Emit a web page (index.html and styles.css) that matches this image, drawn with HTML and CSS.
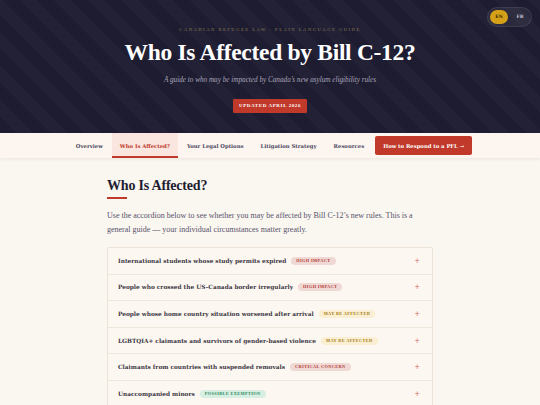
FILE: index.html
```html
<!DOCTYPE html>
<html lang="en">
<head>
<meta charset="utf-8">
<title>Who Is Affected by Bill C-12?</title>
<link rel="stylesheet" href="styles.css">
</head>
<body>
<header class="hero">
  <div class="lang">
    <span class="lang-opt active">EN</span>
    <span class="lang-opt">FR</span>
  </div>
  <p class="kicker">Canadian Refugee Law · Plain Language Guide</p>
  <h1 class="hero-title">Who Is Affected by Bill C-12?</h1>
  <p class="hero-sub">A guide to who may be impacted by Canada’s new asylum eligibility rules</p>
  <span class="updated">Updated April 2026</span>
</header>
<nav class="nav">
  <a class="tab">Overview</a>
  <a class="tab active">Who Is Affected?</a>
  <a class="tab">Your Legal Options</a>
  <a class="tab">Litigation Strategy</a>
  <a class="tab">Resources</a>
  <a class="cta">How to Respond to a PFL →</a>
</nav>
<main class="main">
  <section class="section">
    <h2 class="section-title">Who Is Affected?</h2>
    <div class="rule"></div>
    <p class="intro">Use the accordion below to see whether you may be affected by Bill C-12’s new rules. This is a general guide — your individual circumstances matter greatly.</p>
    <div class="accordion">
      <div class="row"><span class="label">International students whose study permits expired</span><span class="badge red">High impact</span><span class="plus">+</span></div>
      <div class="row"><span class="label">People who crossed the US–Canada border irregularly</span><span class="badge red">High impact</span><span class="plus">+</span></div>
      <div class="row"><span class="label">People whose home country situation worsened after arrival</span><span class="badge yellow">May be affected</span><span class="plus">+</span></div>
      <div class="row"><span class="label">LGBTQIA+ claimants and survivors of gender-based violence</span><span class="badge yellow">May be affected</span><span class="plus">+</span></div>
      <div class="row"><span class="label">Claimants from countries with suspended removals</span><span class="badge red">Critical concern</span><span class="plus">+</span></div>
      <div class="row"><span class="label">Unaccompanied minors</span><span class="badge green">Possible exemption</span><span class="plus">+</span></div>
    </div>
  </section>
</main>
</body>
</html>
```

FILE: styles.css
```css
* { box-sizing: border-box; }
html, body { margin: 0; padding: 0; }
body {
  background: #faf6f0;
  font-family: "DejaVu Serif", "Liberation Serif", serif;
  color: #2a2738;
  overflow: hidden;
}

.hero {
  position: relative;
  height: 133px;
  padding-top: 25px;
  text-align: center;
  background-color: #1e1c30;
  background-image: repeating-linear-gradient(45deg, rgba(255,255,255,0) 0, rgba(255,255,255,0) 12px, rgba(255,255,255,0.022) 12px, rgba(255,255,255,0.022) 24px);
}
.lang {
  position: absolute;
  top: 7px;
  right: 8px;
  display: flex;
  align-items: center;
  gap: 3px;
  padding: 2px;
  border-radius: 10px;
  background: rgba(255,255,255,0.06);
  border: 1px solid rgba(255,255,255,0.08);
}
.lang-opt {
  display: block;
  width: 18px;
  height: 14px;
  line-height: 14px;
  border-radius: 7px;
  font-size: 4.5px;
  font-weight: bold;
  color: #c4c1d4;
  text-align: center;
}
.lang-opt.active { background: #d4a017; color: #3b2c05; }

.kicker {
  margin: 0;
  line-height: 10px;
  font-family: "Liberation Serif", serif;
  font-size: 4.6px;
  letter-spacing: 1.5px;
  text-transform: uppercase;
  color: #8d7d58;
}
.hero-title {
  margin: 1px 0 0;
  line-height: 32px;
  font-family: "Liberation Serif", serif;
  font-size: 23.5px;
  font-weight: bold;
  letter-spacing: -0.3px;
  color: #ffffff;
}
.hero-sub {
  margin: 6px 0 0;
  line-height: 12px;
  font-family: "Liberation Serif", serif;
  font-style: italic;
  font-size: 7.2px;
  color: #a9a6bb;
}
.updated {
  display: inline-block;
  margin-top: 13px;
  height: 14px;
  line-height: 14px;
  padding: 0 6px;
  background: #c0392b;
  border-radius: 1px;
  font-family: "Liberation Serif", serif;
  font-size: 5px;
  font-weight: bold;
  letter-spacing: 0.6px;
  text-transform: uppercase;
  color: #fff;
}

.nav {
  display: flex;
  justify-content: center;
  align-items: center;
  height: 25px;
  gap: 1px;
  background: #fdf5ef;
  box-shadow: 0 1px 3px rgba(40,30,30,0.08);
}
.tab {
  display: flex;
  align-items: center;
  height: 25px;
  padding: 0 8px;
  font-size: 5.3px;
  font-weight: bold;
  color: #4a4660;
  border-bottom: 2px solid transparent;
  padding-top: 2px;
}
.tab.active {
  background: #fbe6df;
  color: #c0392b;
  border-bottom-color: #c0392b;
}
.cta {
  display: flex;
  align-items: center;
  height: 19px;
  margin-left: 2px;
  padding: 0 8px;
  background: #c0392b;
  border-radius: 2px;
  font-size: 5.3px;
  font-weight: bold;
  color: #fff;
}

.main { padding-top: 19px; }
.section {
  width: 326px;
  margin: 0 auto;
}
.section-title {
  margin: 0;
  line-height: 18px;
  font-family: "Liberation Serif", serif;
  font-size: 14px;
  font-weight: bold;
  letter-spacing: -0.2px;
  color: #1e1c30;
}
.rule {
  width: 20px;
  height: 2px;
  margin-top: 2px;
  background: #c0392b;
}
.intro {
  margin: 10px 0 0;
  line-height: 14px;
  font-family: "Liberation Serif", serif;
  font-size: 8px;
  color: #57536b;
}
.accordion {
  margin-top: 10px;
  border: 1px solid #ece2d7;
  border-radius: 2px;
  background: #fdf7f1;
}
.row {
  display: flex;
  align-items: center;
  height: 26.6px;
  padding: 0 12px 0 10px;
  border-bottom: 1px solid #efe6dc;
}
.label {
  font-size: 5.8px;
  font-weight: bold;
  color: #3b3744;
}
.badge {
  margin-left: 5px;
  height: 8px;
  line-height: 8px;
  padding: 0 5px;
  border-radius: 4px;
  font-family: "Liberation Serif", serif;
  font-size: 4.3px;
  font-weight: bold;
  letter-spacing: 0.4px;
  text-transform: uppercase;
}
.badge.red { background: #f0d8d5; color: #b23b31; }
.badge.yellow { background: #fbefd3; color: #a47b14; }
.badge.green { background: #d7eee2; color: #2f8a5c; }
.plus {
  margin-left: auto;
  font-family: "DejaVu Sans", sans-serif;
  font-size: 7px;
  color: #cf6a63;
}
```
